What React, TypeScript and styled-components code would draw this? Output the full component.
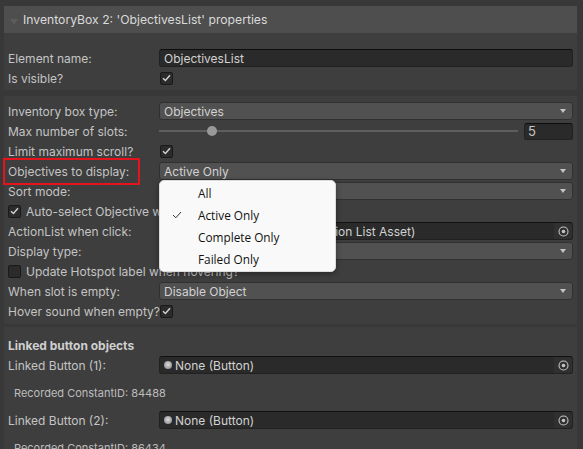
import React from "react";
import styled, { createGlobalStyle } from "styled-components";

const Global = createGlobalStyle`
  html, body { margin: 0; padding: 0; background: #383838; }
  body { font-family: Inter, "Noto Sans", sans-serif; font-size: 12px; color: #c4c4c4; }
  * { box-sizing: border-box; }
`;

const Page = styled.div`
  width: 583px;
  height: 449px;
  overflow: hidden;
  padding: 6px 6px 0 4px;
  display: flex;
  flex-direction: column;
  & > * { flex-shrink: 0; }
`;

const Header = styled.div`
  height: 27px;
  background: #4e4e4e;
  display: flex;
  align-items: center;
  gap: 5px;
  padding-left: 6px;
  font-size: 12.2px;
  color: #dadada;
`;

const Foldout = styled.span`
  width: 0;
  height: 0;
  border-left: 4px solid transparent;
  border-right: 4px solid transparent;
  border-top: 6px solid #5c5c5c;
  margin-top: 4px;
`;

const Panel = styled.div<{ $pt: number; $pb: number; $mt: number }>`
  background: #3e3e3e;
  padding: ${(p) => p.$pt}px 4px ${(p) => p.$pb}px 4px;
  margin-top: ${(p) => p.$mt}px;
  display: flex;
  flex-direction: column;
  & > * { flex-shrink: 0; }
`;

const Row = styled.div`
  height: 20px;
  display: grid;
  grid-template-columns: 151px 1fr;
  align-items: center;
  position: relative;
`;

const Label = styled.span<{ $marked?: boolean }>`
  white-space: nowrap;
  position: relative;
  ${(p) =>
    p.$marked
      ? `&::after {
    content: "";
    position: absolute;
    left: -5px;
    top: -6px;
    width: 133px;
    height: 23px;
    border: 2px solid #e5131b;
  }`
      : ""}
`;

const Cell = styled.div`
  position: relative;
  height: 18px;
  display: flex;
  align-items: center;
`;

const Dropdown = styled.div`
  width: 100%;
  height: 18px;
  background: #515151;
  border: 1px solid #303030;
  border-radius: 3px;
  display: flex;
  align-items: center;
  padding: 0 6px 0 4px;
  color: #d2d2d2;
  justify-content: space-between;
`;

const Arrow = styled.span`
  width: 0;
  height: 0;
  border-left: 3.5px solid transparent;
  border-right: 3.5px solid transparent;
  border-top: 4px solid #c4c4c4;
`;

const TextField = styled.div`
  width: 100%;
  height: 18px;
  background: #2a2a2a;
  border: 1px solid #212121;
  border-top-color: #0d0d0d;
  border-radius: 3px;
  display: flex;
  align-items: center;
  padding: 0 4px;
  color: #d2d2d2;
`;

const ObjectField = styled.div<{ $indent?: number }>`
  width: 100%;
  height: 18px;
  background: #2a2a2a;
  border: 1px solid #212121;
  border-top-color: #111;
  border-radius: 3px;
  display: flex;
  align-items: center;
  padding-left: ${(p) => p.$indent ?? 4}px;
  color: #d2d2d2;
  gap: 3px;
  overflow: hidden;
`;

const ObjText = styled.span`
  flex: 1;
  white-space: nowrap;
`;

const PickerButton = styled.span`
  width: 18px;
  height: 16px;
  background: #303030;
  display: flex;
  align-items: center;
  justify-content: center;
  border-radius: 0 2px 2px 0;
`;

const Dot = styled.span`
  width: 8px;
  height: 8px;
  border-radius: 50%;
  background: radial-gradient(circle at 50% 45%, #e0e0e0 0, #b0b0b0 45%, #808080 100%);
`;

const Check = styled.span`
  width: 13px;
  height: 13px;
  background: #2b2b2b;
  border: 1px solid #1a1a1a;
  border-radius: 2px;
  display: inline-flex;
  align-items: center;
  justify-content: center;
  margin-left: 1px;
  flex-shrink: 0;
`;

const CheckRow = styled.div`
  height: 20px;
  display: flex;
  align-items: center;
  gap: 5px;
  white-space: nowrap;
`;

const SliderWrap = styled.div`
  height: 18px;
  display: flex;
  align-items: center;
  gap: 6px;
`;

const Track = styled.div`
  flex: 1;
  height: 2px;
  background: #5e5e5e;
  position: relative;
`;

const Knob = styled.span`
  position: absolute;
  top: -4px;
  width: 10px;
  height: 10px;
  border-radius: 50%;
  background: #999;
`;

const NumField = styled(TextField)`
  width: 49px;
  flex: none;
  height: 17px;
  padding-left: 3px;
  font-size: 13px;
  color: #c4c4c4;
`;

const Popup = styled.div`
  position: absolute;
  left: 0;
  top: 18px;
  width: 177px;
  height: 92px;
  background: #f9f9f9;
  border: 1px solid #dcdcdc;
  border-radius: 5px;
  box-shadow: 0 2px 6px rgba(0, 0, 0, 0.35);
  padding: 1px 0;
  z-index: 10;
  font-family: "Open Sans", "Noto Sans", sans-serif;
  font-size: 11.8px;
  color: #111;
`;

const Item = styled.div`
  height: 22px;
  display: flex;
  align-items: center;
  position: relative;
  padding-left: 38px;
`;

const Tick = styled.svg`
  position: absolute;
  left: 12px;
  top: 7px;
`;

const SectionTitle = styled.div`
  height: 20px;
  display: flex;
  align-items: center;
  font-weight: 700;
  color: #cfcfcf;
`;

const Note = styled.div`
  height: 35px;
  display: flex;
  align-items: center;
  padding-left: 6px;
  font-size: 11px;
  color: #bdbdbd;
`;

const CheckMark = () => (
  <svg width="9" height="8" viewBox="0 0 9 8">
    <polyline points="1,4.2 3.4,6.5 8,1.2" fill="none" stroke="#d0d0d0" strokeWidth="1.5" />
  </svg>
);

const Target = () => (
  <svg width="11" height="11" viewBox="0 0 11 11">
    <circle cx="5.5" cy="5.5" r="4.5" fill="none" stroke="#c4c4c4" strokeWidth="1.1" />
    <circle cx="5.5" cy="5.5" r="1.8" fill="#c4c4c4" />
  </svg>
);

const options = ["All", "Active Only", "Complete Only", "Failed Only"];

const DropField = ({ value }: { value: string }) => (
  <Cell>
    <Dropdown>
      <span>{value}</span>
      <Arrow />
    </Dropdown>
  </Cell>
);

export default function App() {
  return (
    <>
      <Global />
      <Page>
        <Header>
          <Foldout />
          <span>InventoryBox 2: 'ObjectivesList' properties</span>
        </Header>
        <Panel $pt={15} $pb={2} $mt={0}>
          <Row>
            <Label>Element name:</Label>
            <Cell>
              <TextField>ObjectivesList</TextField>
            </Cell>
          </Row>
          <Row>
            <Label>Is visible?</Label>
            <Cell>
              <Check>
                <CheckMark />
              </Check>
            </Cell>
          </Row>
        </Panel>
        <Panel $pt={5} $pb={3} $mt={6}>
          <Row>
            <Label>Inventory box type:</Label>
            <DropField value="Objectives" />
          </Row>
          <Row>
            <Label>Max number of slots:</Label>
            <SliderWrap>
              <Track>
                <Knob style={{ left: "48px" }} />
              </Track>
              <NumField>5</NumField>
            </SliderWrap>
          </Row>
          <Row>
            <Label>Limit maximum scroll?</Label>
            <Cell>
              <Check>
                <CheckMark />
              </Check>
            </Cell>
          </Row>
          <Row>
            <Label $marked>Objectives to display:</Label>
            <Cell>
              <Dropdown>
                <span>Active Only</span>
                <Arrow />
              </Dropdown>
              <Popup>
                {options.map((o) => (
                  <Item key={o}>
                    {o === "Active Only" && (
                      <Tick width="10" height="8" viewBox="0 0 10 8">
                        <polyline points="1,4 3.8,6.8 9,1" fill="none" stroke="#333" strokeWidth="1" />
                      </Tick>
                    )}
                    {o}
                  </Item>
                ))}
              </Popup>
            </Cell>
          </Row>
          <Row>
            <Label>Sort mode:</Label>
            <DropField value="None" />
          </Row>
          <CheckRow>
            <Check style={{ marginLeft: 0 }}>
              <CheckMark />
            </Check>
            <span>Auto-select Objective when opened?</span>
          </CheckRow>
          <Row>
            <Label>ActionList when click:</Label>
            <Cell>
              <ObjectField $indent={118}>
                <ObjText>None (Action List Asset)</ObjText>
                <PickerButton>
                  <Target />
                </PickerButton>
              </ObjectField>
            </Cell>
          </Row>
          <Row>
            <Label>Display type:</Label>
            <DropField value="List" />
          </Row>
          <CheckRow>
            <Check style={{ marginLeft: 0 }} />
            <span>Update Hotspot label when hovering?</span>
          </CheckRow>
          <Row>
            <Label>When slot is empty:</Label>
            <DropField value="Disable Object" />
          </Row>
          <Row>
            <Label>Hover sound when empty?</Label>
            <Cell>
              <Check>
                <CheckMark />
              </Check>
            </Cell>
          </Row>
        </Panel>
        <Panel $pt={8} $pb={0} $mt={3}>
          <SectionTitle>Linked button objects</SectionTitle>
          <Row>
            <Label>Linked Button (1):</Label>
            <Cell>
              <ObjectField>
                <Dot />
                <ObjText>None (Button)</ObjText>
                <PickerButton>
                  <Target />
                </PickerButton>
              </ObjectField>
            </Cell>
          </Row>
          <Note>Recorded ConstantID: 84488</Note>
          <Row>
            <Label>Linked Button (2):</Label>
            <Cell>
              <ObjectField>
                <Dot />
                <ObjText>None (Button)</ObjText>
                <PickerButton>
                  <Target />
                </PickerButton>
              </ObjectField>
            </Cell>
          </Row>
          <Note>Recorded ConstantID: 86434</Note>
        </Panel>
      </Page>
    </>
  );
}
